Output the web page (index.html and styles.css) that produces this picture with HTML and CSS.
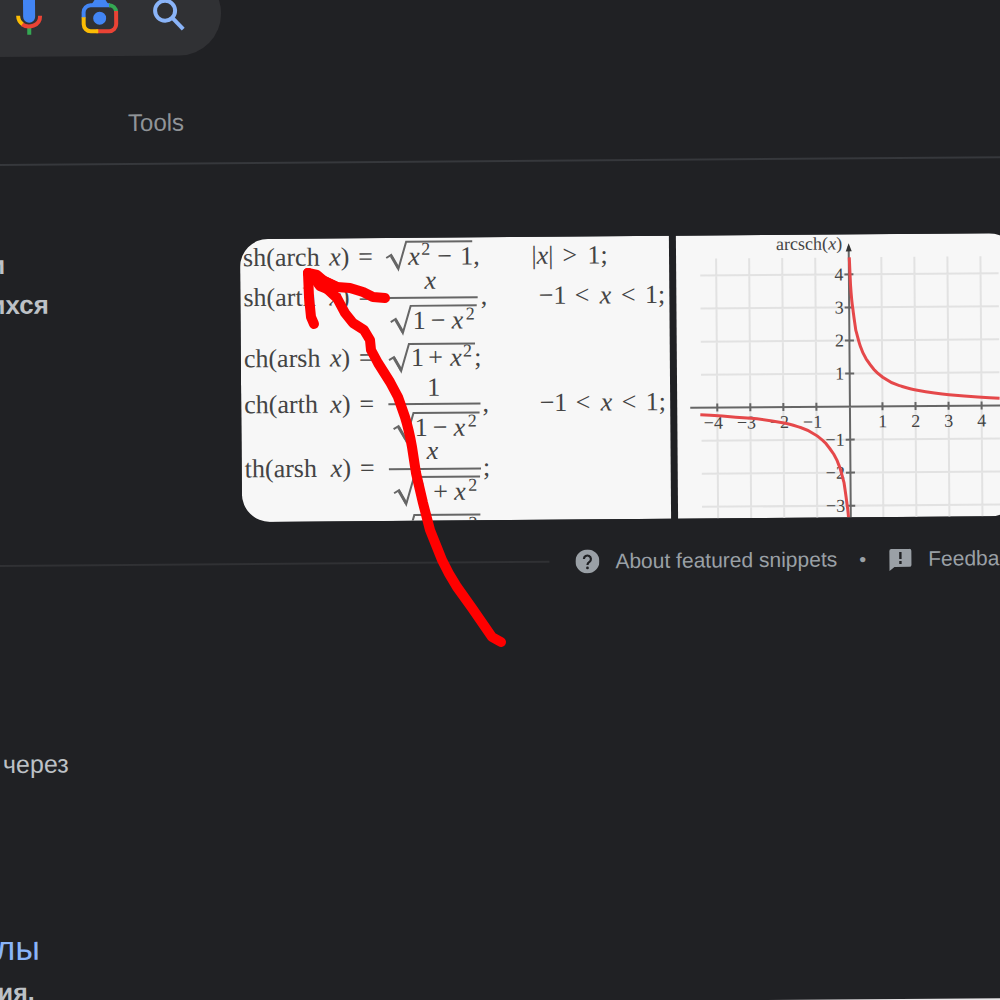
FILE: index.html
```html
<!DOCTYPE html>
<html lang="ru">
<head>
    <meta charset="UTF-8">
    <meta name="viewport" content="width=device-width, initial-scale=1.0">
    <title>Search</title>
    <link rel="stylesheet" href="styles.css">
</head>
<body>
    <div class="page">
        <header class="header">
            <form class="search">
                <button class="search-btn" type="button" aria-label="Voice search">
                    <svg viewBox="0 0 48 48">
                        <rect x="20" y="4" width="12" height="28" rx="6" fill="#4285f4"/>
                        <path d="M26 37v7" stroke="#34a853" stroke-width="4"/>
                        <path d="M15 25c0 4 2 7 5 9" fill="none" stroke="#fbbc04" stroke-width="4"/>
                        <path d="M19 33.500c6 4.500 18 2 18-8.500" fill="none" stroke="#ea4335" stroke-width="4"/>
                    </svg>
                </button>
                <button class="search-btn" type="button" aria-label="Search by image">
                    <svg viewBox="0 0 48 48" fill="none" stroke-width="4">
                        <path d="M9.500 28v-6a7 7 0 0 1 7-7H36" stroke="#4285f4"/>
                        <path d="M17 15l4-6h10l4 6z" fill="#4285f4"/>
                        <path d="M35 15a7 7 0 0 1 7 7" stroke="#34a853"/>
                        <path d="M42 21v13a7 7 0 0 1-7 7H22" stroke="#ea4335"/>
                        <path d="M24 41h-7.500a7 7 0 0 1-7-7v-7" stroke="#fbbc04"/>
                        <circle cx="25.500" cy="28" r="6.500" fill="#4285f4"/>
                    </svg>
                </button>
                <button class="search-btn" type="submit" aria-label="Search">
                    <svg viewBox="0 0 48 48" fill="none" stroke="#8ab4f8" stroke-width="4">
                        <circle cx="20" cy="21" r="10"/>
                        <path d="M27 28l11 11.500"/>
                    </svg>
                </button>
            </form>
            <nav class="nav">
                <a href="#">Tools</a>
            </nav>
        </header>

        <main>
            <section class="featured">
                <p class="snippet">и<br>ихся</p>
                <div class="thumbs">
                    <a class="thumb formulas" href="#">
                        <svg viewBox="0 0 428 283">
                            <defs>
                                <g id="radical">
                                    <path d="M-20 16l5-3 7 14L0 0h66"/>
                                    <path d="M-15 14l7 12" stroke-width="3"/>
                                </g>
                            </defs>
                            <g class="lines">
                                <use href="#radical" x="166" y="4"/>
                                <use href="#radical" x="170" y="68"/>
                                <use href="#radical" x="168" y="106"/>
                                <use href="#radical" x="172" y="175"/>
                                <use href="#radical" x="172" y="239"/>
                                <use href="#radical" x="172" y="277"/>
                                <path d="M146 60h91M147 166h92M147 231h92"/>
                            </g>
                            <g class="math">
                                <text x="3" y="27">sh(arch</text>
                                <text x="89" y="27"><tspan class="var">x</tspan>)</text>
                                <text x="118" y="27">=</text>
                                <text x="168" y="27"><tspan class="var">x</tspan></text>
                                <text class="sup" x="181" y="17">2</text>
                                <text x="197" y="27">−</text>
                                <text x="220" y="27">1,</text>
                                <text x="291" y="27">|<tspan class="var">x</tspan>|</text>
                                <text x="322" y="27">&gt;</text>
                                <text x="347" y="27">1;</text>

                                <text x="3" y="67">sh(arth</text>
                                <text x="89" y="67"><tspan class="var">x</tspan>)</text>
                                <text x="118" y="67">=</text>
                                <text x="184" y="51"><tspan class="var">x</tspan></text>
                                <text x="172" y="91">1</text>
                                <text x="190" y="91">−</text>
                                <text x="211" y="91"><tspan class="var">x</tspan></text>
                                <text class="sup" x="225" y="82">2</text>
                                <text x="240" y="67">,</text>
                                <text x="298" y="67">−1</text>
                                <text x="334" y="67">&lt;</text>
                                <text x="359" y="67"><tspan class="var">x</tspan></text>
                                <text x="380" y="67">&lt;</text>
                                <text x="404" y="67">1;</text>

                                <text x="3" y="128">ch(arsh</text>
                                <text x="89" y="128"><tspan class="var">x</tspan>)</text>
                                <text x="118" y="128">=</text>
                                <text x="170" y="128">1</text>
                                <text x="187" y="128">+</text>
                                <text x="209" y="128"><tspan class="var">x</tspan></text>
                                <text class="sup" x="222" y="119">2</text>
                                <text x="233" y="128">;</text>

                                <text x="3" y="174">ch(arth</text>
                                <text x="89" y="174"><tspan class="var">x</tspan>)</text>
                                <text x="118" y="174">=</text>
                                <text x="186" y="158">1</text>
                                <text x="173" y="198">1</text>
                                <text x="191" y="198">−</text>
                                <text x="212" y="198"><tspan class="var">x</tspan></text>
                                <text class="sup" x="226" y="189">2</text>
                                <text x="241" y="174">,</text>
                                <text x="298" y="174">−1</text>
                                <text x="334" y="174">&lt;</text>
                                <text x="359" y="174"><tspan class="var">x</tspan></text>
                                <text x="380" y="174">&lt;</text>
                                <text x="404" y="174">1;</text>

                                <text x="3" y="238">th(arsh</text>
                                <text x="89" y="238"><tspan class="var">x</tspan>)</text>
                                <text x="118" y="238">=</text>
                                <text x="185" y="221"><tspan class="var">x</tspan></text>
                                <text x="173" y="262">1</text>
                                <text x="191" y="262">+</text>
                                <text x="212" y="262"><tspan class="var">x</tspan></text>
                                <text class="sup" x="226" y="253">2</text>
                                <text x="241" y="238">;</text>
                                <text x="173" y="299">1</text>
                                <text class="sup" x="226" y="291">2</text>
                            </g>
                        </svg>
                    </a>
                    <a class="thumb graph" href="#">
                        <svg viewBox="0 0 341 283">
                            <path class="grid" d="M40 23v260M73 23v260M106 23v260M139 23v260M205 23v260M238 23v260M271 23v260M304 23v260M24 40h298M24 73h298M24 106h298M24 139h298M24 205h298M24 238h298M24 271h298"/>
                            <path class="axis" d="M13 172h328M172.500 12v271"/>
                            <path class="ticks" d="M40 168v8M73 168v8M106 168v8M139 168v8M205 168v8M238 168v8M271 168v8M304 168v8M168 40h9M168 73h9M168 106h9M168 139h9M168 205h9M168 238h9M168 271h9"/>
                            <path d="M172.500 9l3 8h-6z" fill="#333"/>
                            <g class="labels">
                                <text x="100" y="15">arcsch(<tspan class="var">x</tspan>)</text>
                                <g text-anchor="end">
                                    <text x="167" y="46">4</text>
                                    <text x="167" y="79">3</text>
                                    <text x="167" y="112">2</text>
                                    <text x="167" y="145">1</text>
                                    <text x="167" y="211">−1</text>
                                    <text x="167" y="244">−2</text>
                                    <text x="167" y="277">−3</text>
                                </g>
                                <g text-anchor="middle">
                                    <text x="36" y="193">−4</text>
                                    <text x="69" y="193">−3</text>
                                    <text x="102" y="193">−2</text>
                                    <text x="135" y="193">−1</text>
                                    <text x="205" y="193">1</text>
                                    <text x="238" y="193">2</text>
                                    <text x="271" y="193">3</text>
                                    <text x="304" y="193">4</text>
                                </g>
                            </g>
                            <g class="curve">
                                <path id="branch" d="M173 23L174 50C174.500 58 175 67 176 73C177 82 178 89 179 96C181 103 182 109 184 113.500C185 117 187 121 189 124.500C192 129 195 133 197 135.500C200 139 203 141 205.500 143C211 147 217 150 222 151.500C227 153 233 155 238.500 156C249 158 260 160 271.500 161C288 162.500 305 164 322 165"/>
                                <use href="#branch" transform="rotate(180 172.500 172)"/>
                            </g>
                        </svg>
                    </a>
                </div>
            </section>

            <div class="about">
                <hr>
                <a class="about-link" href="#">
                    <svg viewBox="0 0 24 24">
                        <circle cx="12" cy="12" r="12" fill="#9aa0a6"/>
                        <path d="M8.500 9.500a3.500 3.500 0 1 1 5.500 3c-1.500 1-2 1.500-2 3" fill="none" stroke="#202124" stroke-width="2.200"/>
                        <circle cx="12" cy="18.500" r="1.400" fill="#202124"/>
                    </svg>
                    About featured snippets
                </a>
                <span class="dot">•</span>
                <a class="about-link" href="#">
                    <svg viewBox="0 0 24 24">
                        <path d="M3 2h18q2 0 2 2v14q0 2-2 2H6l-5 4V4q0-2 2-2z" fill="#9aa0a6"/>
                        <path d="M12 5v7M12 14v3" stroke="#202124" stroke-width="2.400"/>
                    </svg>
                    Feedback
                </a>
            </div>

            <p class="text">через</p>

            <h3 class="title"><a href="#">лы</a></h3>
            <p class="text bold">ия.</p>
        </main>
    </div>

    <svg class="arrow" viewBox="0 0 1000 1000">
        <path d="M501 642L492 637L472 608L457 587Q448 573 442 560L430 530L423 503L416 473L412 447Q409 430 405 417L398 397L390 382L378 363L371 350L370 340L364 330L353 323L345 313L337 298L323 285L308 273"/>
        <path d="M308 273L309 297L311 317L314 324"/>
        <path d="M308 273L317 275L324 281L337 287L350 288L363 292L373 297L385 298"/>
        <path d="M312 275L320 286L330 290L337 287z" fill="red"/>
    </svg>
</body>
</html>
```
FILE: styles.css
```css
* {
    box-sizing: border-box;
    margin: 0;
    padding: 0;
}

html {
    background-color: #e8e6e8;
}

body {
    position: relative;
    height: 100vh;
    overflow: hidden;
    font-family: "Liberation Sans", Arial, sans-serif;
    font-size: 24px;
    color: #bdc1c6;
}

a {
    color: inherit;
    text-decoration: none;
}

/* the whole page is slightly tilted, wider than the window to hide its side edges */
.page {
    width: calc(100% + 32px);
    height: calc(100vh + 6px);
    margin-left: -16px;
    padding: 0 16px;
    background-color: #202124;
    transform: rotate(-0.45deg);
    transform-origin: 16px 0;
}

.header {
    display: flow-root;
    margin: 0 -16px;
    padding-left: 16px;
    border-bottom: 2px solid #36383c;
}

.search {
    display: flex;
    justify-content: flex-end;
    align-items: center;
    gap: 23px;
    width: 237px;
    height: 84px;
    margin: -27px 0 0 -16px;
    padding-right: 28px;
    background-color: #303134;
    border-radius: 0 42px 42px 0;
}

.search-btn {
    width: 48px;
    height: 48px;
    background: none;
    border: none;
    cursor: pointer;
}

.search-btn svg,
.thumb svg {
    display: block;
    width: 100%;
}

.nav {
    padding: 53px 0 26px 127px;
    line-height: 28px;
    color: #909498;
}

.featured {
    display: flex;
    justify-content: space-between;
    margin-top: 75px;
}

.snippet {
    margin-left: -13px;
    padding-top: 4px;
    font-size: 26px;
    font-weight: bold;
    line-height: 40px;
}

.thumbs {
    display: flex;
    gap: 7px;
    width: 77.7%;
    margin-right: -15px;
    border-radius: 28px;
    overflow: hidden;
}

.thumb {
    background-color: #f7f7f7;
}

.formulas {
    flex: 428;
}

.graph {
    flex: 341;
}

.math,
.labels {
    font-family: "Liberation Serif", "Times New Roman", serif;
    font-size: 26px;
    fill: #444;
}

.labels {
    font-size: 18px;
}

.var {
    font-style: italic;
}

.sup {
    font-size: 18px;
}

.lines,
.axis,
.ticks {
    fill: none;
    stroke: #666;
    stroke-width: 2;
}

.grid {
    stroke: #e2e2e2;
    stroke-width: 2;
}

.curve {
    fill: none;
    stroke: #e5484a;
    stroke-width: 3;
}

.about {
    display: flex;
    align-items: center;
    height: 28px;
    margin: 28px -48px 0 -16px;
    font-size: 21px;
    color: #9aa0a6;
    white-space: nowrap;
}

.about hr {
    flex: 1;
    margin-right: 26px;
    border: none;
    border-top: 2px solid #303134;
}

.about-link {
    display: flex;
    align-items: center;
    gap: 16px;
}

.about-link svg {
    width: 24px;
    height: 24px;
}

.about-link:last-child {
    margin-right: 32px;
}

.dot {
    margin: 0 22px;
    font-size: 20px;
}

.text {
    margin-top: 170px;
    margin-left: -3px;
    font-size: 25px;
    line-height: 28px;
}

.title {
    margin-top: 150px;
    margin-left: -12px;
    font-size: 34px;
    font-weight: normal;
    line-height: 40px;
    color: #8ab4f8;
}

.bold {
    margin-top: 10px;
    margin-left: -10px;
    font-weight: bold;
}

.arrow {
    position: absolute;
    top: 0;
    left: 0;
    width: 100%;
    fill: none;
    stroke: red;
    stroke-width: 10;
    stroke-linecap: round;
    stroke-linejoin: round;
    pointer-events: none;
}
```
